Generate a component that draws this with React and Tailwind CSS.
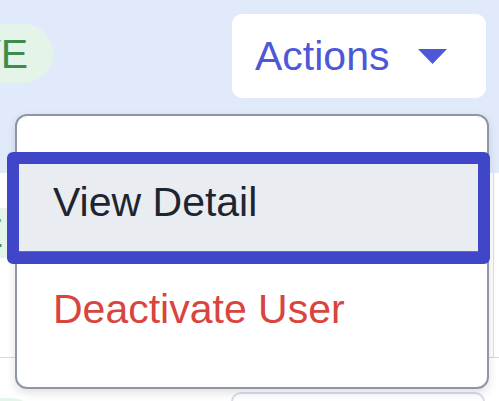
import React from "react";

const font = { fontFamily: '"Liberation Sans", Arial, sans-serif' };

const Pill = ({ className = "" }) => (
  <span
    className={`shrink-0 rounded-full bg-[#e5f4e8] px-[25px] text-[41px] leading-[46px] text-[#3d8c4b] flex items-center ${className}`}
  >
    ACTIVE
  </span>
);

const Caret = () => (
  <svg width="29" height="15" viewBox="0 0 29 15" className="shrink-0">
    <path d="M0 0 H29 L14.5 15 Z" fill="#4d58d6" />
  </svg>
);

export default function App() {
  return (
    <div className="relative w-[499px] h-[401px] overflow-hidden bg-white" style={font}>
      {/* row 1 */}
      <div className="h-[173px] bg-[#e0eafb]">
        <div className="flex h-[112px] items-center">
          <Pill className="h-[59px] ml-[-145px] mb-[5px]" />
          <button className="ml-auto mr-[13px] flex h-[84px] w-[254px] items-center rounded-[10px] bg-white pl-[23px] pr-[39px]">
            <span className="text-[41px] leading-[46px] text-[#4d58d6]">Actions</span>
            <span className="ml-auto">
              <Caret />
            </span>
          </button>
        </div>
      </div>

      {/* row 2 */}
      <div className="flex h-[185px] border-b border-[#d5d9e0]">
        <div className="pt-[35px]">
          <Pill className="h-[50px] ml-[-170px]" />
        </div>
        <div className="ml-auto mr-[5px] border-l border-[#dcdfe6]" />
      </div>

      {/* row 3 */}
      <div className="flex items-start pt-[34px]">
        <Pill className="h-[59px] ml-[-158px] mt-[6px]" />
        <div className="ml-[191px] h-[84px] w-[254px] rounded-[10px] border-2 border-[#d9dcf0]" />
      </div>

      {/* dropdown menu */}
      <div className="absolute left-[15px] top-[114px] w-[474px] h-[275px] rounded-[12px] border-2 border-[#8e96a6] bg-white pt-[36px] shadow-[0_4px_10px_rgba(0,0,0,0.12)]">
        <div className="ml-[-10px] mr-[-3px] h-[112px] rounded-[6px] border-[12px] border-[#4046c8]">
          <div className="h-full bg-[#e9edf2] border-b border-[#c24a6a] pl-[34px] pt-[15px]">
            <span className="text-[41px] leading-[46px] text-[#1f2530]">View Detail</span>
          </div>
        </div>
        <div className="mt-[22px] pl-[36px] text-[41px] leading-[46px] text-[#d9443f]">
          Deactivate User
        </div>
      </div>
    </div>
  );
}
